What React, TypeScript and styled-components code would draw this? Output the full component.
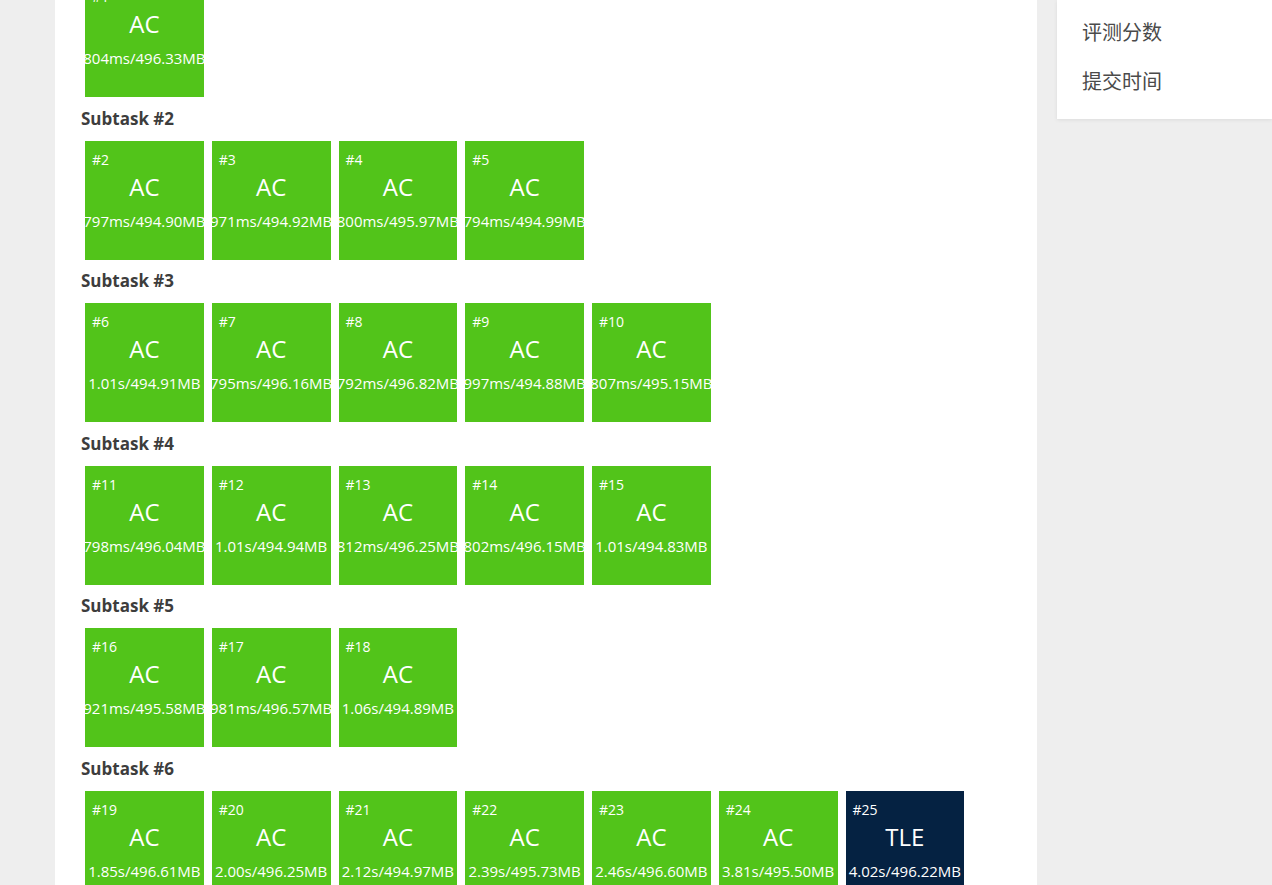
import React from "react";
import styled, { createGlobalStyle } from "styled-components";

const Global = createGlobalStyle`
  html, body { margin: 0; padding: 0; background: #eeeeee; overflow: hidden; }
  body { font-family: "Open Sans", "Noto Sans CJK SC", sans-serif; }
`;

const Page = styled.div`
  display: flex;
  align-items: flex-start;
  gap: 20px;
  padding-left: 55px;
  height: 885px;
  overflow: hidden;
`;

const MainCard = styled.main`
  width: 956px;
  flex: none;
  background: #ffffff;
  margin-top: -80px;
  padding: 18.5px 0 40px 26px;
`;

const Side = styled.aside`
  flex: 1;
  background: #ffffff;
  padding: 7px 0 14px 26px;
  box-shadow: 0 1px 4px rgba(0, 0, 0, 0.08);
`;

const SideItem = styled.div`
  font-family: "Noto Sans CJK SC", sans-serif;
  font-size: 20px;
  line-height: 49px;
  color: #4a4a4a;
  margin-left: -1px;
`;

const Label = styled.div`
  font-size: 17px;
  font-weight: 700;
  line-height: 22px;
  color: #3d3d3d;
  margin: 6.5px 0 7.25px 0;
`;

const Row = styled.div`
  display: flex;
  flex-wrap: wrap;
`;

const Box = styled.div<{ $status: string }>`
  width: 118.75px;
  height: 118.75px;
  margin: 4px;
  background: ${(p) => (p.$status === "AC" ? "#52c41a" : "#052242")};
  color: #ffffff;
  display: flex;
  flex-direction: column;
  padding-top: 10px;
  box-sizing: border-box;
  overflow: hidden;
`;

const Num = styled.div`
  font-size: 14px;
  line-height: 18px;
  padding-left: 7px;
`;

const Verdict = styled.div`
  font-size: 24px;
  line-height: 36px;
  text-align: center;
`;

const Stat = styled.div`
  display: flex;
  justify-content: center;
  font-size: 15px;
  line-height: 20px;
  margin-top: 6px;
  white-space: nowrap;
`;

type Case = { id: number; s: string; t: string };

const groups: Case[][] = [
  [{ id: 1, s: "AC", t: "804ms/496.33MB" }],
  [
    { id: 2, s: "AC", t: "797ms/494.90MB" },
    { id: 3, s: "AC", t: "971ms/494.92MB" },
    { id: 4, s: "AC", t: "800ms/495.97MB" },
    { id: 5, s: "AC", t: "794ms/494.99MB" },
  ],
  [
    { id: 6, s: "AC", t: "1.01s/494.91MB" },
    { id: 7, s: "AC", t: "795ms/496.16MB" },
    { id: 8, s: "AC", t: "792ms/496.82MB" },
    { id: 9, s: "AC", t: "997ms/494.88MB" },
    { id: 10, s: "AC", t: "807ms/495.15MB" },
  ],
  [
    { id: 11, s: "AC", t: "798ms/496.04MB" },
    { id: 12, s: "AC", t: "1.01s/494.94MB" },
    { id: 13, s: "AC", t: "812ms/496.25MB" },
    { id: 14, s: "AC", t: "802ms/496.15MB" },
    { id: 15, s: "AC", t: "1.01s/494.83MB" },
  ],
  [
    { id: 16, s: "AC", t: "921ms/495.58MB" },
    { id: 17, s: "AC", t: "981ms/496.57MB" },
    { id: 18, s: "AC", t: "1.06s/494.89MB" },
  ],
  [
    { id: 19, s: "AC", t: "1.85s/496.61MB" },
    { id: 20, s: "AC", t: "2.00s/496.25MB" },
    { id: 21, s: "AC", t: "2.12s/494.97MB" },
    { id: 22, s: "AC", t: "2.39s/495.73MB" },
    { id: 23, s: "AC", t: "2.46s/496.60MB" },
    { id: 24, s: "AC", t: "3.81s/495.50MB" },
    { id: 25, s: "TLE", t: "4.02s/496.22MB" },
  ],
];

export default function App() {
  return (
    <>
      <Global />
      <Page>
        <MainCard>
          {groups.map((g, i) => (
            <section key={i}>
              <Label>Subtask #{i + 1}</Label>
              <Row>
                {g.map((c) => (
                  <Box key={c.id} $status={c.s}>
                    <Num>#{c.id}</Num>
                    <Verdict>{c.s}</Verdict>
                    <Stat>
                      <span>{c.t}</span>
                    </Stat>
                  </Box>
                ))}
              </Row>
            </section>
          ))}
        </MainCard>
        <Side>
          <SideItem>评测分数</SideItem>
          <SideItem>提交时间</SideItem>
        </Side>
      </Page>
    </>
  );
}
